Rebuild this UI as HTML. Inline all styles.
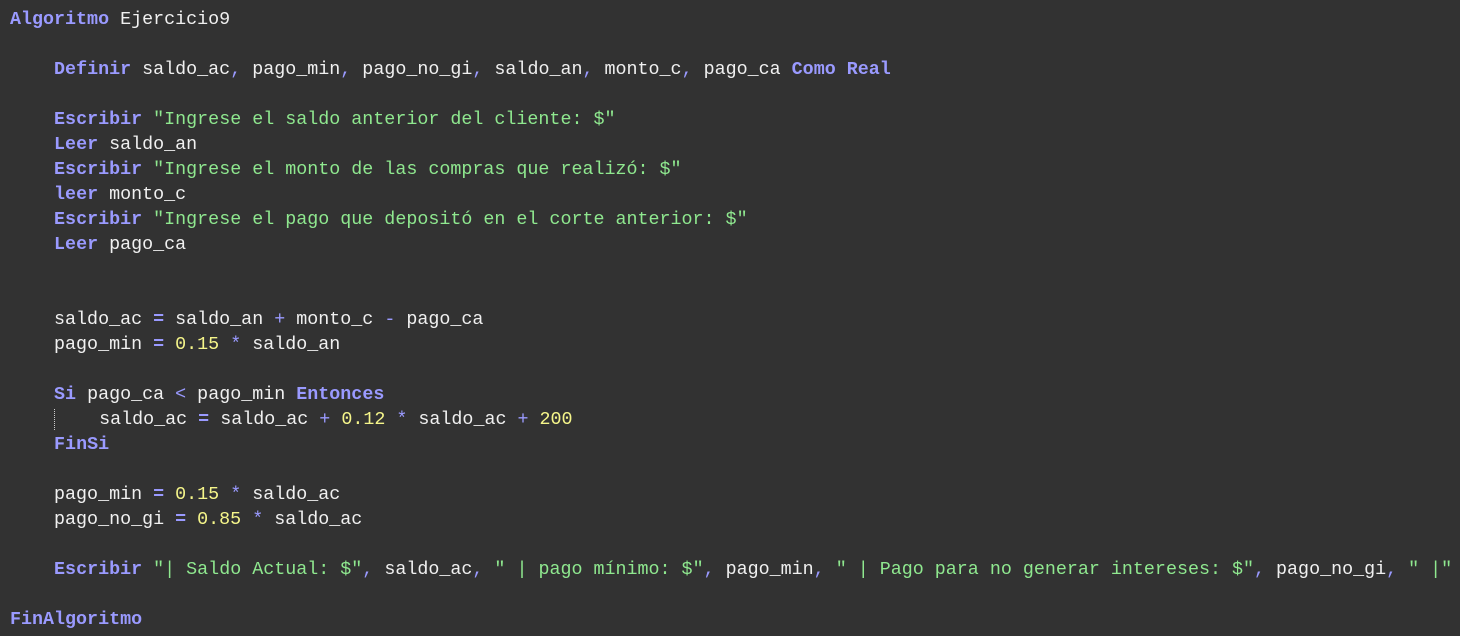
<!DOCTYPE html><html><head><style>
body{margin:0;background:#323232;width:1460px;height:636px;overflow:hidden}
pre{margin:0;padding:7px 0 0 10px;font-family:"Liberation Mono",monospace;font-size:18.35px;line-height:25px;color:#f0f0f0;letter-spacing:0}
.k{color:#9a9aff;font-weight:bold}.o{color:#9a9aff}.s{color:#8fe88f}.n{color:#f5f58a}
.g{border-left:1px dotted #ccc}
</style></head><body><pre><span class="k">Algoritmo</span> Ejercicio9

    <span class="k">Definir</span> saldo_ac<span class="o">,</span> pago_min<span class="o">,</span> pago_no_gi<span class="o">,</span> saldo_an<span class="o">,</span> monto_c<span class="o">,</span> pago_ca <span class="k">Como Real</span>

    <span class="k">Escribir</span> <span class="s">"Ingrese el saldo anterior del cliente: $"</span>
    <span class="k">Leer</span> saldo_an
    <span class="k">Escribir</span> <span class="s">"Ingrese el monto de las compras que realizó: $"</span>
    <span class="k">leer</span> monto_c
    <span class="k">Escribir</span> <span class="s">"Ingrese el pago que depositó en el corte anterior: $"</span>
    <span class="k">Leer</span> pago_ca


    saldo_ac <span class="k">=</span> saldo_an <span class="o">+</span> monto_c <span class="o">-</span> pago_ca
    pago_min <span class="k">=</span> <span class="n">0.15</span> <span class="o">*</span> saldo_an

    <span class="k">Si</span> pago_ca <span class="o">&lt;</span> pago_min <span class="k">Entonces</span>
    <span class="g">    </span>saldo_ac <span class="k">=</span> saldo_ac <span class="o">+</span> <span class="n">0.12</span> <span class="o">*</span> saldo_ac <span class="o">+</span> <span class="n">200</span>
    <span class="k">FinSi</span>

    pago_min <span class="k">=</span> <span class="n">0.15</span> <span class="o">*</span> saldo_ac
    pago_no_gi <span class="k">=</span> <span class="n">0.85</span> <span class="o">*</span> saldo_ac

    <span class="k">Escribir</span> <span class="s">"| Saldo Actual: $"</span><span class="o">,</span> saldo_ac<span class="o">,</span> <span class="s">" | pago mínimo: $"</span><span class="o">,</span> pago_min<span class="o">,</span> <span class="s">" | Pago para no generar intereses: $"</span><span class="o">,</span> pago_no_gi<span class="o">,</span> <span class="s">" |"</span>

<span class="k">FinAlgoritmo</span></pre></body></html>
